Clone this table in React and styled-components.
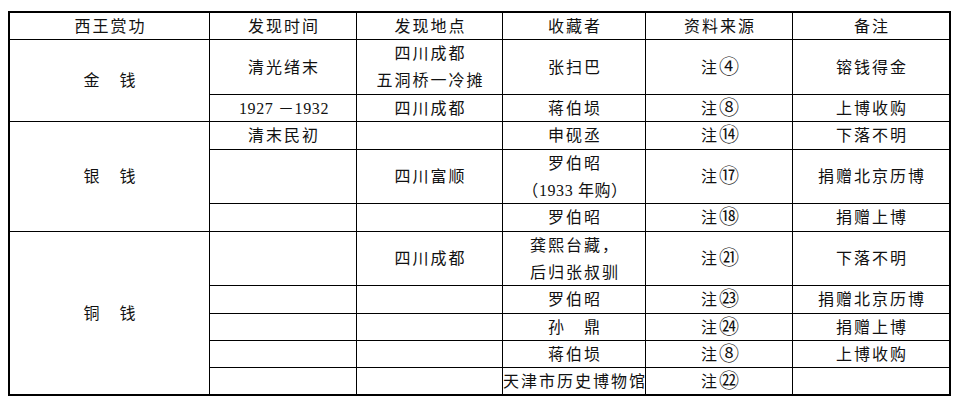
import React from "react";
import styled, { createGlobalStyle } from "styled-components";

const GlobalStyle = createGlobalStyle`
  html, body {
    margin: 0;
    padding: 0;
    background: #ffffff;
  }
`;

const Page = styled.div`
  padding: 11px 0 0 8px;
`;

const Grid = styled.div`
  display: grid;
  width: fit-content;
  grid-template-columns: 199px 146px 145px 142px 146px 156px;
  grid-template-rows: 26px 54px 26px 27px 53px 27px 53px 27px 26px 26px 26px;
  gap: 1px;
  background: #000;
  border: 2px solid #000;
`;

const Cell = styled.div`
  grid-row: span ${(p) => p.$rows || 1};
  background: #fff;
  display: flex;
  flex-direction: column;
  align-items: center;
  justify-content: center;
  text-align: center;
  white-space: nowrap;
  overflow: visible;
  font-family: "Liberation Serif", "Noto Sans CJK SC", serif;
  font-size: 16px;
  letter-spacing: 2px;
  line-height: 27px;
  color: #111;
  padding-left: 2px;
`;

const Line = styled.span`
  display: block;
`;

const Num = styled.span`
  letter-spacing: 0.6px;
`;

const Note = styled.span`
  display: block;
  white-space: nowrap;
`;

const Circled = styled.span`
  font-family: "Noto Sans CJK SC", sans-serif;
  font-size: 20px;
  line-height: 16px;
  letter-spacing: 0;
  display: inline-block;
  vertical-align: -1px;
`;

const header = ["西王赏功", "发现时间", "发现地点", "收藏者", "资料来源", "备注"];

const note = (n) => (
  <Note>
    注<Circled>{n}</Circled>
  </Note>
);

const groups = [
  {
    name: "金　钱",
    rows: [
      ["清光绪末", ["四川成都", "五洞桥一冷摊"], "张扫巴", note("④"), "镕钱得金"],
      [<Num>1927 －1932</Num>, "四川成都", "蒋伯埙", note("⑧"), "上博收购"],
    ],
  },
  {
    name: "银　钱",
    rows: [
      ["清末民初", "", "申砚丞", note("⑭"), "下落不明"],
      [
        "",
        "四川富顺",
        ["罗伯昭", <Num>（1933 年购）</Num>],
        note("⑰"),
        "捐赠北京历博",
      ],
      ["", "", "罗伯昭", note("⑱"), "捐赠上博"],
    ],
  },
  {
    name: "铜　钱",
    rows: [
      ["", "四川成都", ["龚熙台藏，", "后归张叔驯"], note("㉑"), "下落不明"],
      ["", "", "罗伯昭", note("㉓"), "捐赠北京历博"],
      ["", "", "孙　鼎", note("㉔"), "捐赠上博"],
      ["", "", "蒋伯埙", note("⑧"), "上博收购"],
      ["", "", "天津市历史博物馆", note("㉒"), ""],
    ],
  },
];

function Content({ value }) {
  if (Array.isArray(value)) {
    return value.map((v, i) => <Line key={i}>{v}</Line>);
  }
  return value;
}

export default function App() {
  return (
    <>
      <GlobalStyle />
      <Page>
        <Grid>
          {header.map((h) => (
            <Cell key={h}>{h}</Cell>
          ))}
          {groups.map((g) => (
            <React.Fragment key={g.name}>
              <Cell $rows={g.rows.length}>{g.name}</Cell>
              {g.rows.map((r, ri) =>
                r.map((c, ci) => (
                  <Cell key={`${ri}-${ci}`}>
                    <Content value={c} />
                  </Cell>
                ))
              )}
            </React.Fragment>
          ))}
        </Grid>
      </Page>
    </>
  );
}
